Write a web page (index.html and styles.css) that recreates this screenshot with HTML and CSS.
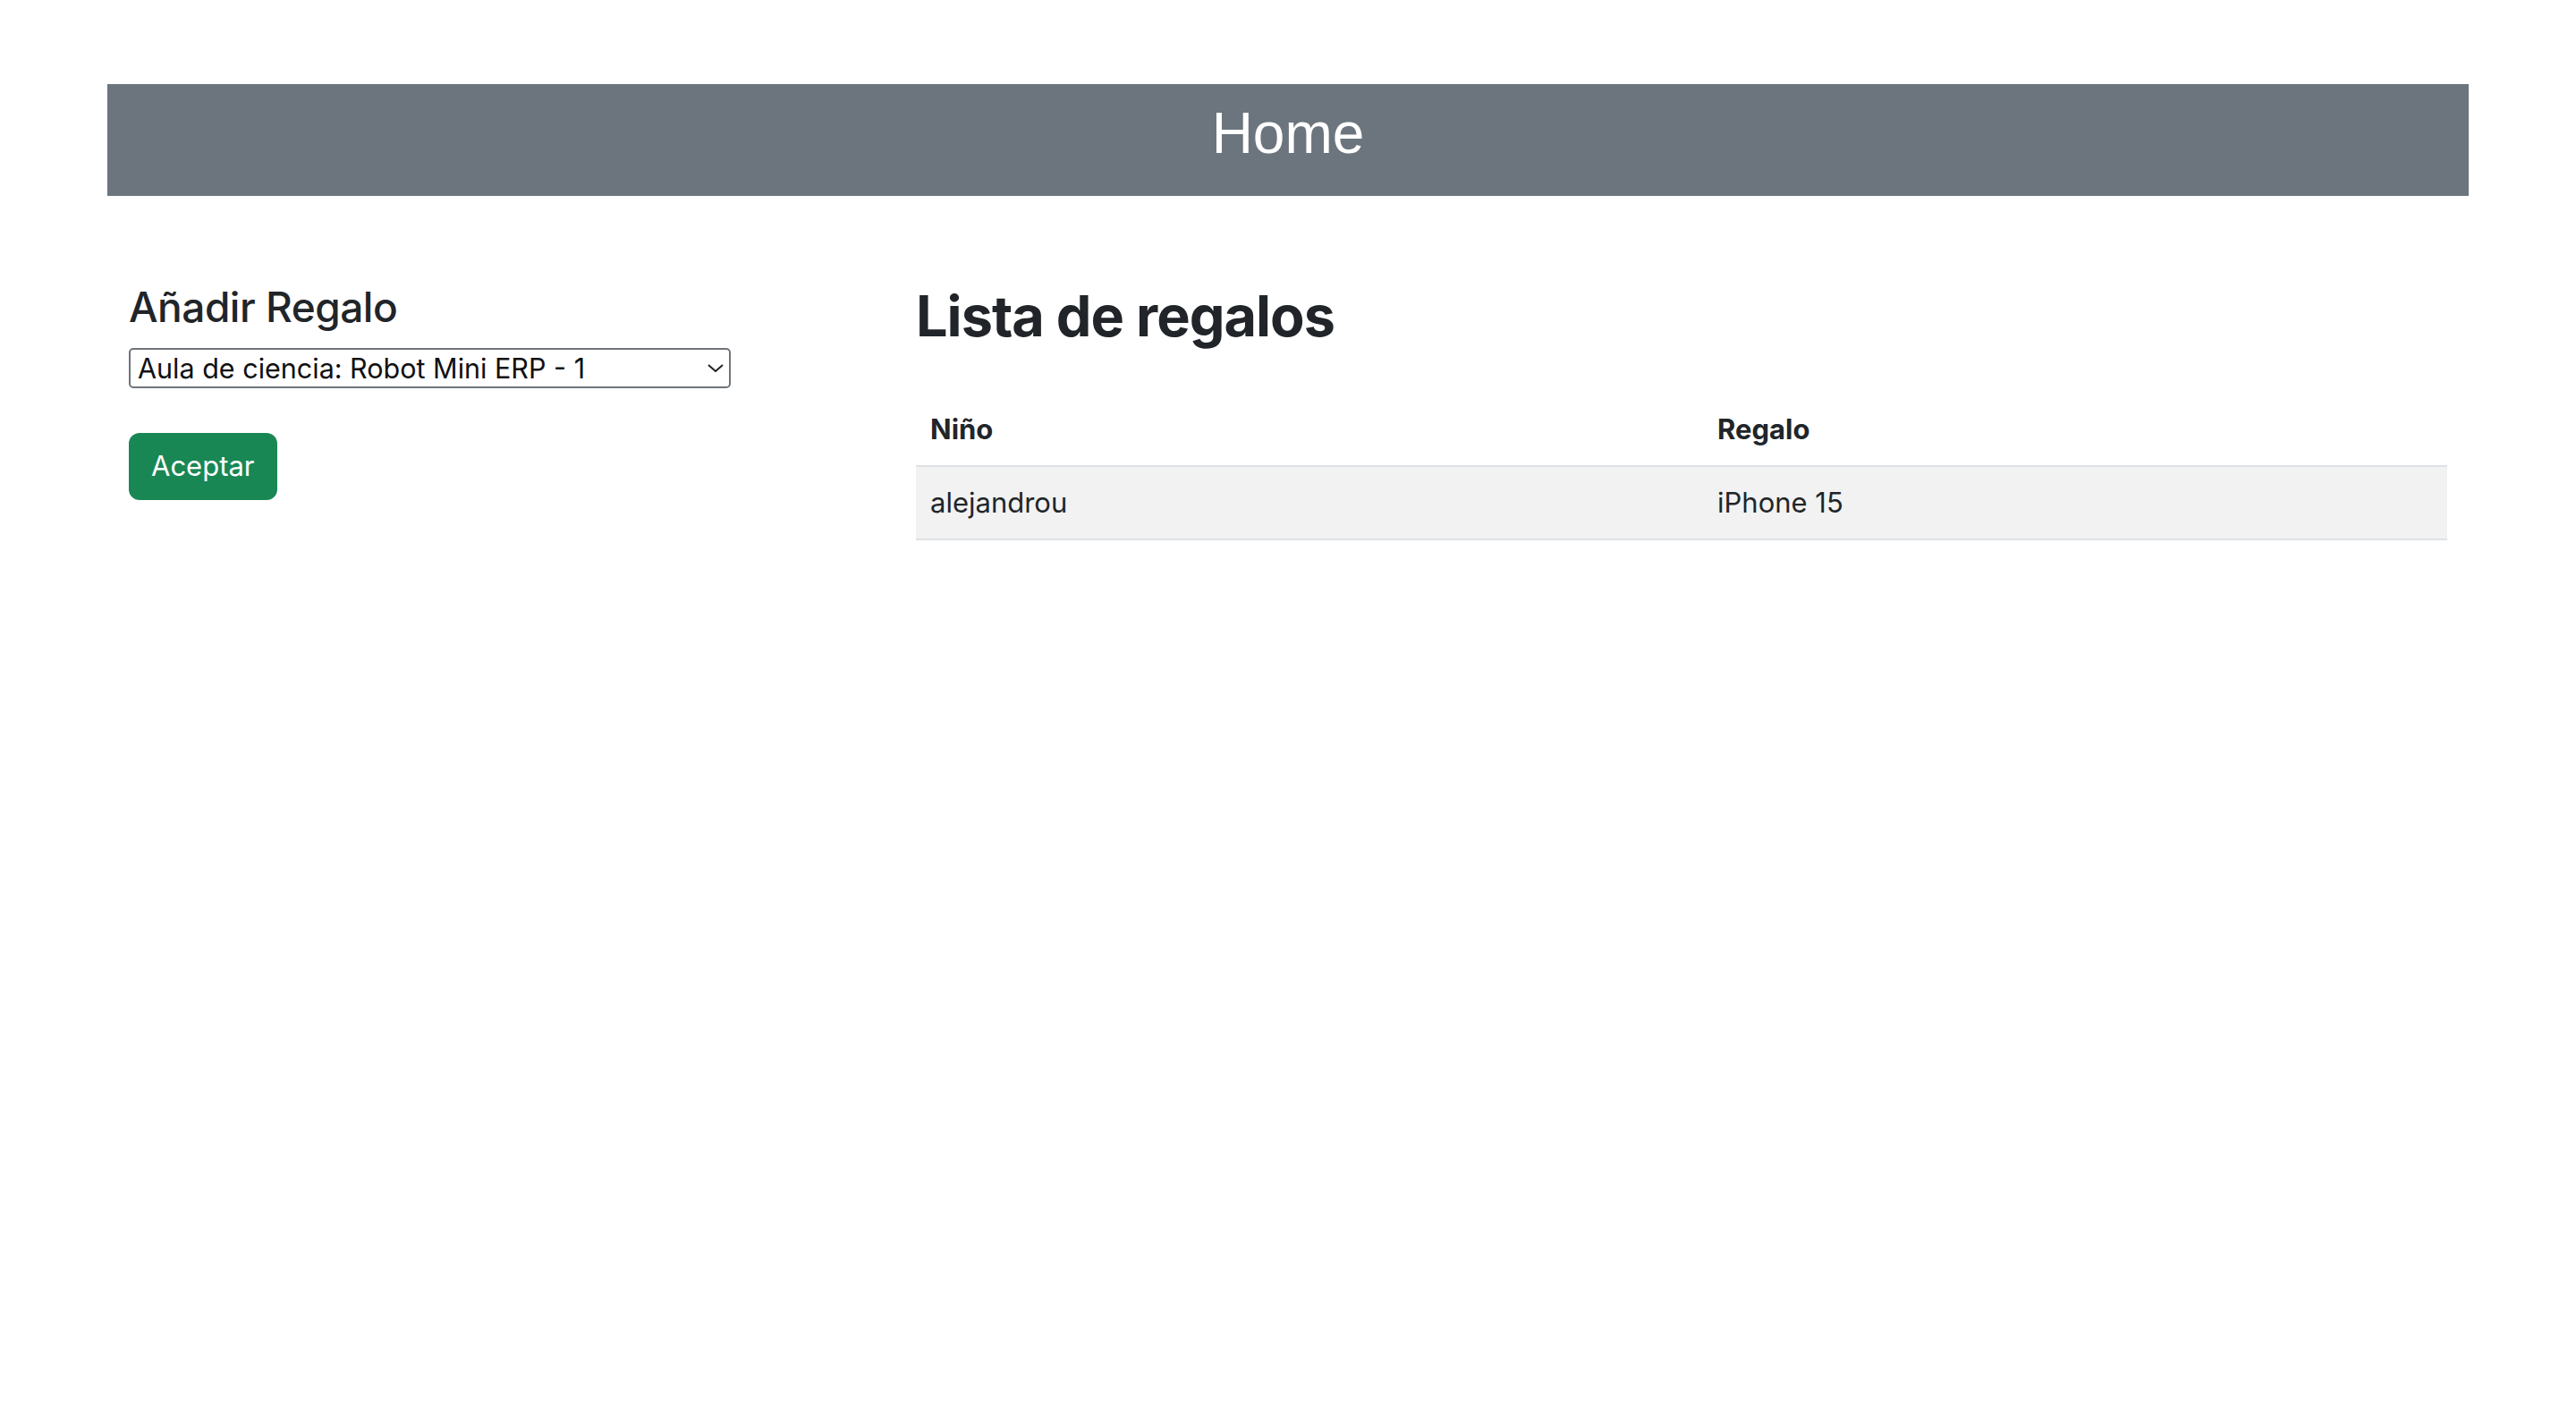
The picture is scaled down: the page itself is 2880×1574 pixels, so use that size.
FILE: index.html
```html
<!DOCTYPE html>
<html lang="es">
<head>
<meta charset="utf-8">
<title>Home</title>
<link rel="stylesheet" href="styles.css">
</head>
<body>
<div class="container">
  <header class="header">
    <h1 class="header-title">Home</h1>
  </header>
  <main class="main">
    <section class="left">
      <h4 class="left-title">Añadir Regalo</h4>
      <div class="select-wrap">
        <select class="select">
          <option>Aula de ciencia: Robot Mini ERP - 1</option>
        </select>
        <svg class="chevron" width="18" height="9" viewBox="0 0 18 9"><path d="M1 1 L9 8 L17 1" fill="none" stroke="#222" stroke-width="2"/></svg>
      </div>
      <button class="btn">Aceptar</button>
    </section>
    <section class="right">
      <h2 class="right-title">Lista de regalos</h2>
      <table class="table">
        <thead>
          <tr><th class="col1">Niño</th><th>Regalo</th></tr>
        </thead>
        <tbody>
          <tr><td>alejandrou</td><td>iPhone 15</td></tr>
        </tbody>
      </table>
    </section>
  </main>
</div>
</body>
</html>
```
FILE: styles.css
```css
html, body {
  margin: 0;
  padding: 0;
  background: #fff;
}
body {
  font-family: Inter, "Noto Sans", sans-serif;
  color: #212529;
}
.container {
  width: 2640px;
  margin: 0 auto;
  padding-top: 94px;
}
.header {
  background: #6c757d;
  height: 125px;
  box-sizing: border-box;
  padding-top: 17px;
  text-align: center;
}
.header-title {
  margin: 0;
  font-family: "Liberation Sans", Arial, sans-serif;
  font-weight: 400;
  font-size: 64px;
  line-height: 76.8px;
  color: #fff;
}
.main {
  display: flex;
  margin-top: 96px;
  padding: 0 24px;
}
.left {
  width: 880px;
  flex: 0 0 880px;
}
.left-title {
  margin: 0 0 16px;
  font-size: 46px;
  font-weight: 500;
  line-height: 57.6px;
  letter-spacing: -0.5px;
}
.select-wrap {
  position: relative;
  width: 673px;
  height: 45px;
}
.select {
  appearance: none;
  -webkit-appearance: none;
  width: 100%;
  height: 45px;
  box-sizing: border-box;
  border: 2px solid #6f747a;
  border-radius: 5px;
  background: #fff;
  padding: 0 40px 0 8px;
  font-family: Inter, "Noto Sans", sans-serif;
  font-size: 30.5px;
  color: #111;
  margin: 0;
}
.chevron {
  position: absolute;
  right: 8px;
  top: 18px;
  pointer-events: none;
}
.btn {
  display: block;
  margin-top: 50px;
  height: 75px;
  padding: 0 25px;
  border: 0;
  border-radius: 12px;
  background: #198754;
  color: #fff;
  font-family: Inter, "Noto Sans", sans-serif;
  font-size: 31px;
  line-height: 48px;
}
.right {
  flex: 1 1 auto;
}
.right-title {
  margin: 0 0 48px;
  font-size: 63px;
  font-weight: 700;
  line-height: 76.8px;
  letter-spacing: -1px;
}
.table {
  width: 100%;
  border-collapse: collapse;
  font-size: 31px;
  line-height: 48px;
}
.table th, .table td {
  text-align: left;
  padding: 16px;
}
.table th {
  font-weight: 700;
  border-bottom: 2px solid #dee2e6;
}
.table .col1 {
  width: 848px;
}
.table td {
  background: #f2f2f2;
  border-bottom: 2px solid #dee2e6;
}
```
